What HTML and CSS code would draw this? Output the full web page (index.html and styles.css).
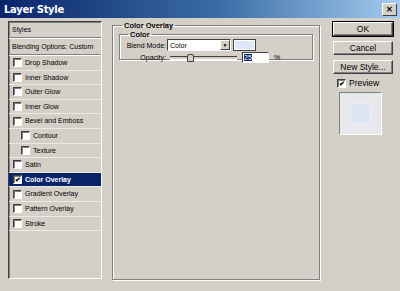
FILE: index.html
```html
<!DOCTYPE html>
<html>
<head>
    <title>Layer Style</title>
    <meta charset="utf-8">
    <link rel="stylesheet" href="styles.css">
</head>
<body>
    <div class="dialog">
        <div class="titlebar">
            <span class="title">Layer Style</span>
            <span class="close-btn">&#x2715;</span>
        </div>
        <div class="body">
            <div class="style-list">
                <div class="list-head">Styles</div>
                <div class="list-head">Blending Options: Custom</div>
                <div class="item"><span class="cb"></span>Drop Shadow</div>
                <div class="item"><span class="cb"></span>Inner Shadow</div>
                <div class="item"><span class="cb"></span>Outer Glow</div>
                <div class="item"><span class="cb"></span>Inner Glow</div>
                <div class="item"><span class="cb"></span>Bevel and Emboss</div>
                <div class="item sub"><span class="cb"></span>Contour</div>
                <div class="item sub"><span class="cb"></span>Texture</div>
                <div class="item"><span class="cb"></span>Satin</div>
                <div class="item selected"><span class="cb checked">&#x2714;</span>Color Overlay</div>
                <div class="item"><span class="cb"></span>Gradient Overlay</div>
                <div class="item"><span class="cb"></span>Pattern Overlay</div>
                <div class="item"><span class="cb"></span>Stroke</div>
            </div>

            <div class="settings">
                <fieldset class="group outer">
                    <legend>Color Overlay</legend>
                    <fieldset class="group inner">
                        <legend>Color</legend>
                        <div class="row">
                            <span class="label">Blend Mode:</span>
                            <div class="select">
                                <span class="select-val">Color</span>
                                <span class="select-arrow">&#9660;</span>
                            </div>
                            <span class="swatch"></span>
                        </div>
                        <div class="row">
                            <span class="label">Opacity:</span>
                            <div class="slider">
                                <span class="track"></span>
                                <span class="thumb"></span>
                            </div>
                            <div class="num"><span class="sel">25</span></div>
                            <span class="pct">%</span>
                        </div>
                    </fieldset>
                </fieldset>
            </div>

            <div class="buttons">
                <div class="btn default">OK</div>
                <div class="btn">Cancel</div>
                <div class="btn">New Style...</div>
                <div class="preview-check"><span class="cb checked">&#x2714;</span>Preview</div>
                <div class="preview-box"><span class="preview-inner"></span></div>
            </div>
        </div>
    </div>
</body>
</html>
```

FILE: styles.css
```css
body {
    margin: 0;
    background: #d4d0c8;
    font-family: "Liberation Sans", Arial, sans-serif;
    font-size: 7px;
    color: #000;
}
.dialog {
    width: 400px;
    height: 291px;
    background: #d4d0c8;
    overflow: hidden;
}
.titlebar {
    height: 18px;
    background: linear-gradient(90deg, #0a246a 0%, #3a6ea5 55%, #a6caf0 100%);
    display: flex;
    align-items: center;
    justify-content: space-between;
    padding: 0 3px 0 4px;
}
.title {
    color: #fff;
    font-weight: bold;
    font-size: 10px;
    font-family: "DejaVu Sans", sans-serif;
    letter-spacing: -0.3px;
}
.close-btn {
    width: 13px;
    height: 11px;
    background: #d4d0c8;
    border: 1px solid;
    border-color: #fff #404040 #404040 #fff;
    font-size: 8px;
    font-weight: bold;
    line-height: 11px;
    text-align: center;
}
.body {
    display: flex;
    padding: 3px 0 0 8px;
}

/* left list */
.style-list {
    width: 92px;
    height: 256px;
    border: 1px solid;
    border-color: #404040 #fff #fff #404040;
    box-shadow: inset 1px 1px 0 #808080;
}
.list-head {
    height: 15px;
    line-height: 15px;
    padding-left: 3px;
    border-bottom: 1px solid #808080;
    box-shadow: 0 1px 0 #fff;
    margin-bottom: 1px;
}
.item {
    height: 13.6px;
    line-height: 13.6px;
    padding-left: 4px;
    border-bottom: 1px solid #ece9e2;
    display: flex;
    align-items: center;
}
.item.sub {
    padding-left: 12px;
}
.item.selected {
    background: #0a246a;
    color: #fff;
    font-weight: bold;
}
.cb {
    width: 7px;
    height: 7px;
    margin-right: 3px;
    background: #fff;
    border: 1px solid;
    border-color: #404040 #fff #fff #404040;
    box-shadow: inset 1px 1px 0 #808080;
    font-size: 7px;
    line-height: 7px;
    text-align: center;
    color: #000;
    font-weight: bold;
}

/* settings */
.settings {
    width: 208px;
    margin-left: 10px;
}
.group {
    margin: 0;
    border: 1px solid #808080;
    box-shadow: 1px 1px 0 #fff, inset 1px 1px 0 #fff;
    padding: 0;
}
.group legend {
    font-weight: bold;
    padding: 0 2px;
    margin-left: 3px;
    font-size: 7.5px;
}
.outer {
    height: 257px;
    padding: 0 6px;
}
.inner {
    height: 28px;
    padding: 0 4px;
}
.inner legend {
    margin-left: 4px;
}
.row {
    display: flex;
    align-items: center;
    height: 12px;
}
.label {
    width: 42px;
    text-align: right;
    margin-right: 1px;
    white-space: nowrap;
}
.select {
    width: 62px;
    height: 10px;
    background: #fff;
    border: 1px solid;
    border-color: #404040 #fff #fff #404040;
    display: flex;
    align-items: center;
    justify-content: space-between;
}
.select-val {
    padding-left: 2px;
}
.select-arrow {
    width: 8px;
    height: 8px;
    background: #d4d0c8;
    border: 1px solid;
    border-color: #fff #404040 #404040 #fff;
    font-size: 5px;
    line-height: 8px;
    text-align: center;
}
.swatch {
    width: 21px;
    height: 10px;
    margin-left: 2px;
    background: #dce8fa;
    border: 1px solid #404040;
    box-shadow: inset 0 0 0 1px #fff;
}
.slider {
    width: 67px;
    height: 8px;
    position: relative;
    margin-left: 3px;
}
.track {
    position: absolute;
    left: 0;
    right: 0;
    top: 3px;
    height: 2px;
    border-top: 1px solid #404040;
    border-bottom: 1px solid #fff;
}
.thumb {
    position: absolute;
    left: 17px;
    top: 1px;
    width: 5px;
    height: 6px;
    background: #d4d0c8;
    border: 1px solid #404040;
    border-radius: 2px 2px 0 0;
}
.num {
    width: 24px;
    height: 9px;
    margin-left: 5px;
    background: #fff;
    border: 1px solid;
    border-color: #404040 #fff #fff #404040;
    line-height: 9px;
    padding-left: 1px;
}
.sel {
    background: #0a246a;
    color: #fff;
}
.pct {
    margin-left: 5px;
}

/* right buttons */
.buttons {
    margin-left: 13px;
    padding-top: 1px;
    display: flex;
    flex-direction: column;
    align-items: center;
    width: 60px;
}
.btn {
    width: 58px;
    height: 12px;
    line-height: 12px;
    text-align: center;
    font-size: 8.5px;
    border: 1px solid;
    border-color: #fff #404040 #404040 #fff;
    box-shadow: inset -1px -1px 0 #808080;
    margin-bottom: 5px;
}
.btn.default {
    outline: 1px solid #000;
}
.preview-check {
    display: flex;
    align-items: center;
    font-size: 8.5px;
    margin-top: -1px;
    margin-left: 8px;
    width: 60px;
}
.preview-box {
    margin-top: 4px;
    margin-right: 5px;
    width: 41px;
    height: 41px;
    border: 1px solid;
    border-color: #808080 #fff #fff #808080;
    background: #e6e8ec;
    display: flex;
    align-items: center;
    justify-content: center;
}
.preview-inner {
    width: 19px;
    height: 19px;
    background: #dde6f2;
    box-shadow: 0 0 3px #f4f6f8;
}
```
